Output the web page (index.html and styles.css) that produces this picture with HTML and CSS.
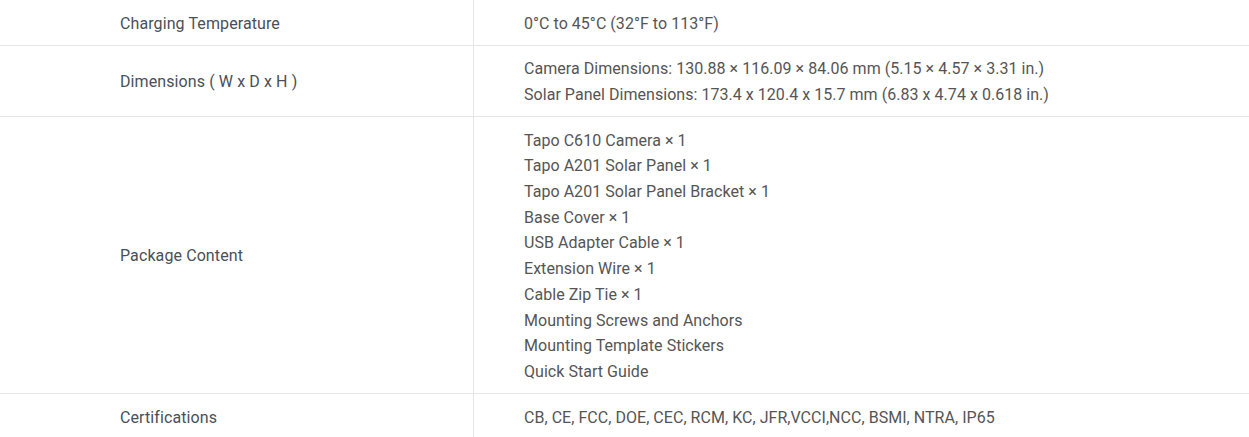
FILE: index.html
```html
<!DOCTYPE html>
<html>
<head>
<meta charset="utf-8">
<link rel="stylesheet" href="styles.css">
</head>
<body>
<table class="spec">
  <tr>
    <th>Charging Temperature</th>
    <td>0°C to 45°C (32°F to 113°F)</td>
  </tr>
  <tr>
    <th>Dimensions ( W x D x H )</th>
    <td>Camera Dimensions: 130.88 × 116.09 × 84.06 mm (5.15 × 4.57 × 3.31 in.)<br>Solar Panel Dimensions: 173.4 x 120.4 x 15.7 mm (6.83 x 4.74 x 0.618 in.)</td>
  </tr>
  <tr>
    <th>Package Content</th>
    <td>Tapo C610 Camera × 1<br>Tapo A201 Solar Panel × 1<br>Tapo A201 Solar Panel Bracket × 1<br>Base Cover × 1<br>USB Adapter Cable × 1<br>Extension Wire × 1<br>Cable Zip Tie × 1<br>Mounting Screws and Anchors<br>Mounting Template Stickers<br>Quick Start Guide</td>
  </tr>
  <tr>
    <th>Certifications</th>
    <td>CB, CE, FCC, DOE, CEC, RCM, KC, JFR,VCCI,NCC, BSMI, NTRA, IP65</td>
  </tr>
</table>
</body>
</html>
```
FILE: styles.css
```css
html, body { margin: 0; padding: 0; background: #fff; }
.spec {
  width: 1249px;
  border-collapse: collapse;
  font-family: Roboto, "Liberation Sans", sans-serif;
  font-size: 16px;
  line-height: 25.7px;
}
.spec th, .spec td {
  padding: 10.5px 0 8.5px;
  border-bottom: 1px solid #e6e6e6;
  vertical-align: middle;
  text-align: left;
  font-weight: 400;
}
.spec th {
  width: 353px;
  padding-left: 120px;
  border-right: 1px solid #e6e6e6;
  color: #4a4f58;
  letter-spacing: 0.1px;
}
.spec td {
  padding-left: 50px;
  color: #555;
  letter-spacing: 0.04px;
}
```
